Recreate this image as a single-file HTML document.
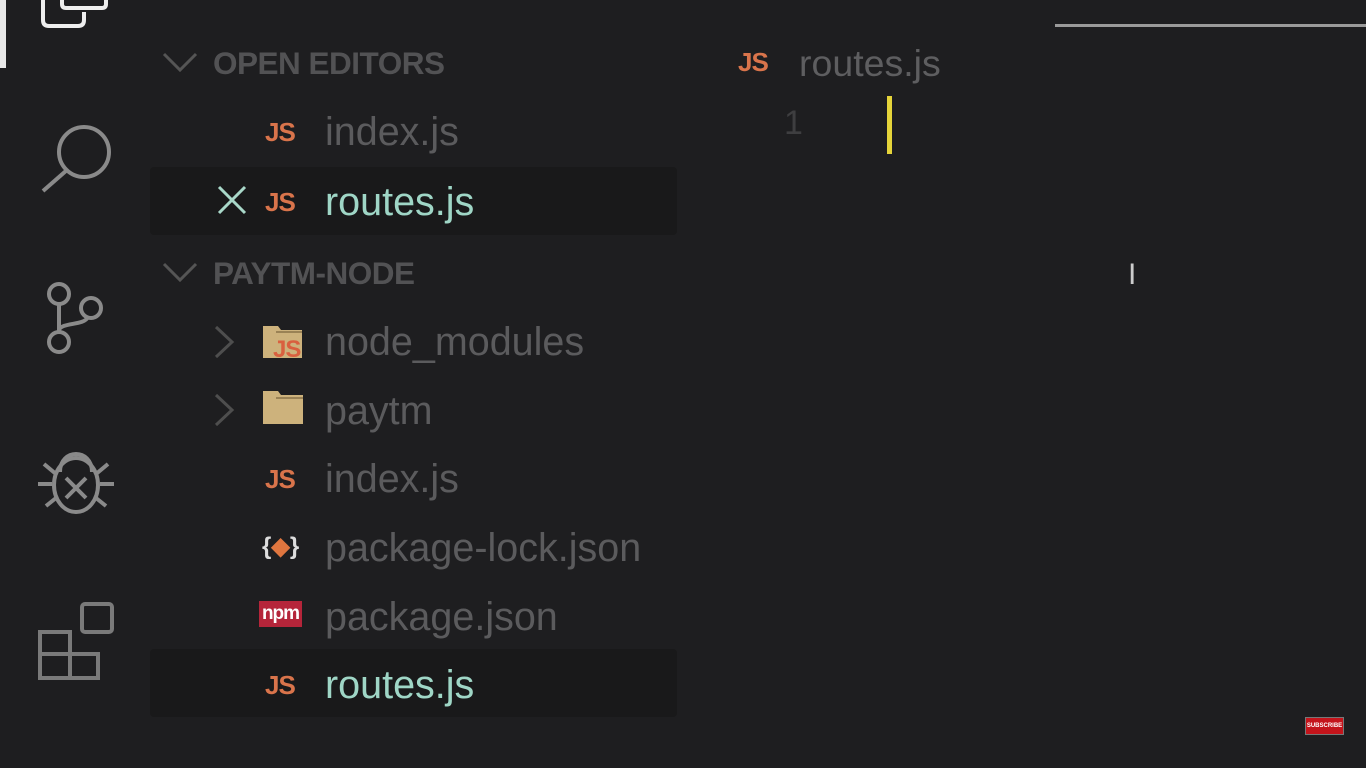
<!DOCTYPE html>
<html><head><style>
body{margin:0;width:1366px;height:768px;background:#1e1e20;overflow:hidden;position:relative;font-family:"Liberation Sans",sans-serif}
.a{position:absolute;white-space:nowrap}
.f{font-size:39.5px;color:#5b5b5d;line-height:40px}
.h{font-size:31.5px;font-weight:bold;color:#525254;line-height:40px;letter-spacing:-0.5px}
.js{font-size:26px;font-weight:bold;color:#d9744b;line-height:40px;letter-spacing:-1px}
.t{color:#9fd6c6}
.sel{position:absolute;left:150px;width:527px;height:68px;background:#19191a;border-radius:4px}
svg{position:absolute}
</style></head><body>
<div class="a" style="left:0;top:0;width:6px;height:68px;background:#e8e8e8"></div>
<svg style="left:36px;top:0" width="80" height="40" viewBox="0 0 80 40"><path d="M7 0 V20 Q7 26 13 26 H42 Q48 26 48 20 V12" fill="none" stroke="#eee" stroke-width="4" stroke-linejoin="round"/><path d="M26 0 V4 Q26 8 30 8 H66 Q70 8 70 4 V0" fill="none" stroke="#eee" stroke-width="4"/></svg>
<svg style="left:36px;top:110px" width="80" height="90" viewBox="0 0 80 90"><circle cx="48" cy="42" r="25" fill="none" stroke="#8a8a8a" stroke-width="4"/><path d="M31 60 L7 81" stroke="#8a8a8a" stroke-width="4"/></svg>
<svg style="left:40px;top:278px" width="70" height="82" viewBox="0 0 70 82"><circle cx="19" cy="16" r="10" fill="none" stroke="#8a8a8a" stroke-width="4"/><circle cx="19" cy="64" r="10" fill="none" stroke="#8a8a8a" stroke-width="4"/><circle cx="51" cy="30" r="10" fill="none" stroke="#8a8a8a" stroke-width="4"/><path d="M19 26 V54 M19 52 C22 44 44 48 48 39" fill="none" stroke="#8a8a8a" stroke-width="4"/></svg>
<svg style="left:36px;top:440px" width="80" height="80" viewBox="0 0 80 80"><path d="M24 32 C24 8 56 8 56 32" fill="none" stroke="#8a8a8a" stroke-width="4"/><ellipse cx="40" cy="45" rx="22" ry="27" fill="none" stroke="#8a8a8a" stroke-width="4"/><path d="M30 38 L50 58 M50 38 L30 58 M2 44 H16 M64 44 H78 M8 24 L20 34 M72 24 L60 34 M10 66 L20 58 M70 66 L60 58" stroke="#8a8a8a" stroke-width="4"/></svg>
<svg style="left:36px;top:600px" width="80" height="82" viewBox="0 0 80 82"><path d="M4 32 H34 V78 H4 Z M4 54 H62 V78 H34 M34 32 V54" fill="none" stroke="#7a7a7a" stroke-width="4"/><rect x="46" y="4" width="30" height="28" rx="3" fill="none" stroke="#7a7a7a" stroke-width="4"/></svg>

<svg style="left:162px;top:50px" width="36" height="24" viewBox="0 0 36 24"><path d="M2 4 L18 20 L34 4" fill="none" stroke="#555" stroke-width="3"/></svg>
<div class="a h" style="left:213px;top:43px">OPEN EDITORS</div>
<div class="a js" style="left:265px;top:112px">JS</div>
<div class="a f" style="left:325px;top:112px">index.js</div>
<div class="sel" style="top:167px"></div>
<svg style="left:217px;top:185px" width="30" height="30" viewBox="0 0 30 30"><path d="M2 2 L28 28 M28 2 L2 28" stroke="#a9d8c9" stroke-width="3"/></svg>
<div class="a js" style="left:265px;top:182px">JS</div>
<div class="a f t" style="left:325px;top:182px">routes.js</div>
<svg style="left:162px;top:260px" width="36" height="24" viewBox="0 0 36 24"><path d="M2 4 L18 20 L34 4" fill="none" stroke="#555" stroke-width="3"/></svg>
<div class="a h" style="left:213px;top:253px">PAYTM-NODE</div>

<svg style="left:212px;top:325px" width="24" height="34" viewBox="0 0 24 34"><path d="M4 2 L20 17 L4 32" fill="none" stroke="#4e4e4e" stroke-width="3"/></svg>
<svg style="left:262px;top:320px" width="44" height="44" viewBox="0 0 44 44"><path d="M1 6 H16 L19 10 H40 V38 H1 Z" fill="#cdb27c"/><path d="M14 12 H40" stroke="#9a8255" stroke-width="2"/></svg>
<div class="a js" style="left:273px;top:330px;color:#d9603f;font-size:24px">JS</div>
<div class="a f" style="left:325px;top:322px">node_modules</div>
<svg style="left:212px;top:393px" width="24" height="34" viewBox="0 0 24 34"><path d="M4 2 L20 17 L4 32" fill="none" stroke="#4e4e4e" stroke-width="3"/></svg>
<svg style="left:262px;top:388px" width="44" height="40" viewBox="0 0 44 40"><path d="M1 3 H16 L19 7 H41 V36 H1 Z" fill="#cdb27c"/><path d="M14 10 H41" stroke="#9a8255" stroke-width="2"/></svg>
<div class="a f" style="left:325px;top:391px">paytm</div>
<div class="a js" style="left:265px;top:459px">JS</div>
<div class="a f" style="left:325px;top:459px">index.js</div>
<div class="a" style="left:262px;top:527px;font-size:24px;color:#ddd;line-height:40px;font-weight:bold">{<span style="color:#e0763f">◆</span>}</div>
<div class="a f" style="left:325px;top:528px">package-lock.json</div>
<div class="a" style="left:259px;top:601px;width:43px;height:26px;background:#b5253a;color:#fff;font-size:19px;font-weight:bold;line-height:26px;text-align:center;letter-spacing:-1px">npm</div>
<div class="a f" style="left:325px;top:597px">package.json</div>
<div class="sel" style="top:649px"></div>
<div class="a js" style="left:265px;top:665px">JS</div>
<div class="a f t" style="left:325px;top:665px">routes.js</div>

<div class="a" style="left:1055px;top:24px;width:311px;height:3px;background:#9a9a9a"></div>
<div class="a js" style="left:738px;top:42px">JS</div>
<div class="a" style="left:799px;top:43px;font-size:37.5px;color:#5e5e60;line-height:40px">routes.js</div>
<div class="a" style="left:784px;top:104px;font-size:34px;color:#3e3e40;line-height:38px">1</div>
<div class="a" style="left:887px;top:96px;width:5px;height:58px;background:#e5d43a"></div>
<div class="a" style="left:1128px;top:258px;font-size:30px;color:#ccc;line-height:34px">I</div>
<div class="a" style="left:1305px;top:717px;width:37px;height:16px;background:#c4141b;color:#fff;font-size:6px;font-weight:bold;line-height:16px;text-align:center;border:1px solid #777;overflow:hidden">SUBSCRIBE</div>
</body></html>
